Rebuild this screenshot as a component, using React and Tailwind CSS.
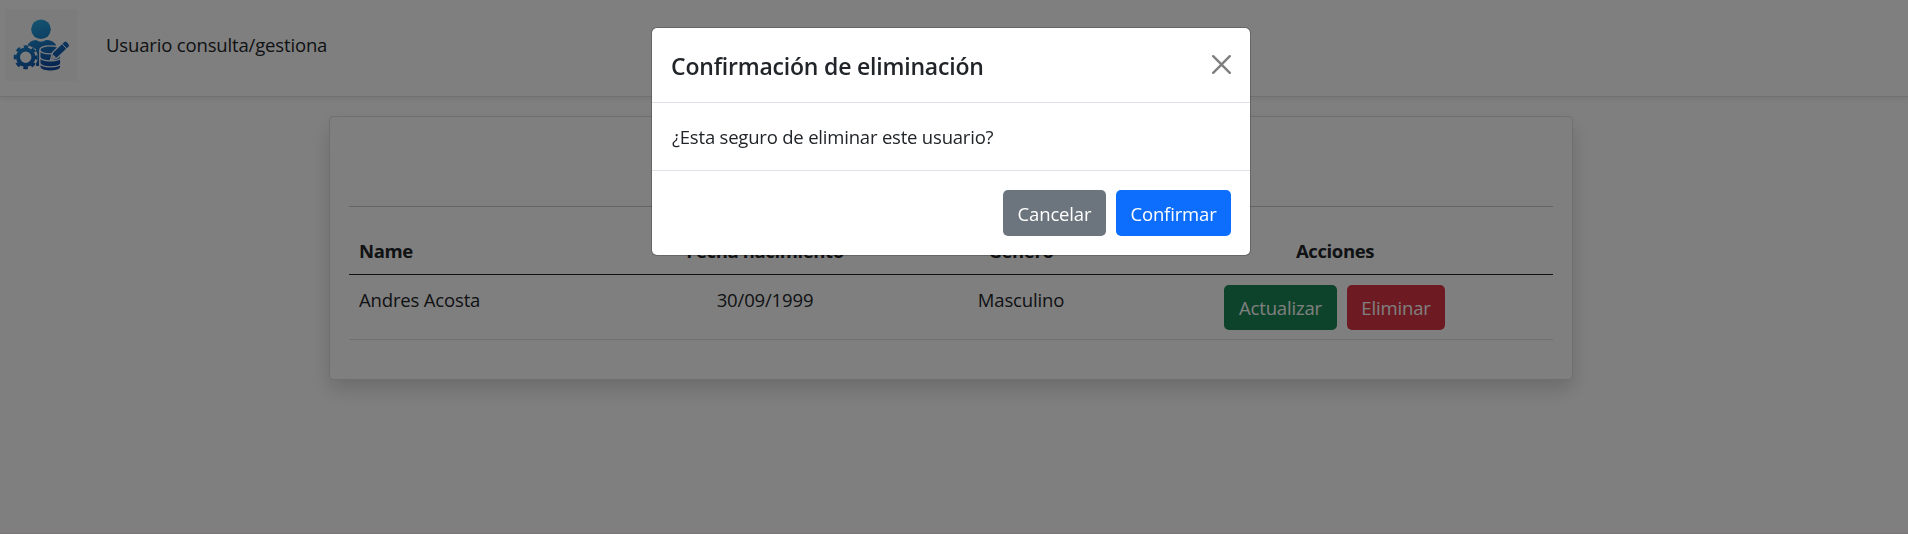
const columns = "grid grid-cols-[256px_320px_192px_436px]";

function Logo() {
  return (
    <svg viewBox="0 0 72 72" className="size-[72px] bg-[#f9f9fb]">
      <defs>
        <linearGradient id="brand" x1="22" y1="8" x2="42" y2="62" gradientUnits="userSpaceOnUse">
          <stop offset="0" stopColor="#2fb4e6" />
          <stop offset=".4" stopColor="#1c86cc" />
          <stop offset="1" stopColor="#0f47a0" />
        </linearGradient>
      </defs>
      <circle cx="36" cy="20.200" r="9.800" fill="url(#brand)" />
      <path d="M22 37 Q25 31 31 31 Q36 34.500 41 31 Q48 31 51 36 V57 H31 V40 Z" fill="url(#brand)" />
      <path
        d="M34.800 41 C34.800 35.500 55.800 35.500 55.800 41 V58 C55.800 63.500 34.800 63.500 34.800 58 Z"
        fill="url(#brand)"
        stroke="#f9f9fb"
        strokeWidth="1.400"
      />
      <path
        d="M35 41.500 C37 46 54 46 56 41.500 M35 48.500 C37 53 54 53 56 48.500 M35 54.500 C37 59 54 59 56 54.500"
        fill="none"
        stroke="#f9f9fb"
        strokeWidth="1.300"
      />
      <path
        d="M45.500 51 L47.500 43.500 L58.800 32.600 Q60.500 31.200 62.200 32.600 L64.200 35 Q65.400 36.600 64 38 L52.500 48.800 Z"
        fill="url(#brand)"
        stroke="#f9f9fb"
        strokeWidth="1.300"
      />
      <path d="M56.800 34.500 L61.800 40" stroke="#f9f9fb" strokeWidth="1" />
      <path d="M47.800 45.500 L51 48.300 L46.800 50 Z" fill="#f9f9fb" />
      <circle cx="20.700" cy="48.300" r="12" fill="#f9f9fb" />
      <circle cx="20.700" cy="48.300" r="7.700" fill="none" stroke="url(#brand)" strokeWidth="4" />
      <circle
        cx="20.700"
        cy="48.300"
        r="10.500"
        fill="none"
        stroke="url(#brand)"
        strokeWidth="3"
        strokeDasharray="4.500 3.747"
        strokeDashoffset="2.250"
      />
    </svg>
  );
}

function Header() {
  return (
    <header className="flex h-[97px] items-start gap-[29px] border-b border-[#dee2e6] bg-white pl-[5px] pt-[9px] shadow-[0_2px_5px_rgba(0,0,0,0.075)]">
      <Logo />
      <span className="pt-[21px] leading-[29px]">Usuario consulta/gestiona</span>
    </header>
  );
}

function UsersCard() {
  return (
    <section className="ml-[329px] mt-[19px] h-[264px] w-[1244px] rounded-[5px] border border-black/[0.125] bg-white px-[19px] shadow-[0_10px_19px_rgba(0,0,0,0.15)]">
      <div className="h-[90px] border-b border-[#c8c9ca]" />
      <div className={`${columns} h-[68px] border-b border-[#212529] pt-[29px] text-center font-bold leading-[29px] tracking-[-0.38px]`}>
        <span className="pl-[10px] text-left">Name</span>
        <span>Fecha nacimiento</span>
        <span>Género</span>
        <span>Acciones</span>
      </div>
      <div className={`${columns} h-[65px] border-b border-[#dee2e6] pt-[10px] text-center leading-[29px]`}>
        <span className="pl-[10px] text-left">Andres Acosta</span>
        <span>30/09/1999</span>
        <span>Masculino</span>
        <div className="flex justify-center gap-[10px] pr-[2px]">
          <button className="h-[45px] w-[113px] rounded-[5px] bg-[#198754] pl-px text-white">Actualizar</button>
          <button className="h-[45px] w-[98px] rounded-[5px] bg-[#dc3545] pl-px text-white">Eliminar</button>
        </div>
      </div>
    </section>
  );
}

function ConfirmDialog() {
  return (
    <div className="fixed inset-0 flex items-start justify-center bg-black/50 pt-[27px]">
      <div role="dialog" className="mr-[6px] h-[229px] w-[600px] rounded-[6px] border border-black/20 bg-white bg-clip-padding">
        <div className="flex h-[75px] items-start justify-between border-b border-[#dee2e6] pl-[19px] pr-[19px]">
          <h5 className="pt-[20px] text-[23px] font-semibold leading-[36px] tracking-[-0.2px]">Confirmación de eliminación</h5>
          <button aria-label="Cerrar" className="pt-[27px] opacity-50">
            <svg viewBox="0 0 16 16" className="size-[19px]">
              <path d="M.293.293a1 1 0 011.414 0L8 6.586 14.293.293a1 1 0 111.414 1.414L9.414 8l6.293 6.293a1 1 0 01-1.414 1.414L8 9.414l-6.293 6.293a1 1 0 01-1.414-1.414L6.586 8 .293 1.707a1 1 0 010-1.414z" />
            </svg>
          </button>
        </div>
        <p className="h-[68px] border-b border-[#dee2e6] pl-[20px] pt-[19px] leading-[29px] tracking-[-0.2px]">¿Esta seguro de eliminar este usuario?</p>
        <div className="flex justify-end gap-[10px] pr-[19px] pt-[19px]">
          <button className="h-[46px] w-[103px] rounded-[5px] bg-[#6c757d] pt-px text-white">Cancelar</button>
          <button className="h-[46px] w-[115px] rounded-[5px] bg-[#0d6efd] pt-px text-white">Confirmar</button>
        </div>
      </div>
    </div>
  );
}

export default function App() {
  return (
    <div className="h-[534px] overflow-hidden border-b border-[#f2ecf0] bg-white font-['Open_Sans','Noto_Sans',sans-serif] text-[18.5px] tracking-[-0.16px] text-[#212529]">
      <Header />
      <UsersCard />
      <ConfirmDialog />
    </div>
  );
}
